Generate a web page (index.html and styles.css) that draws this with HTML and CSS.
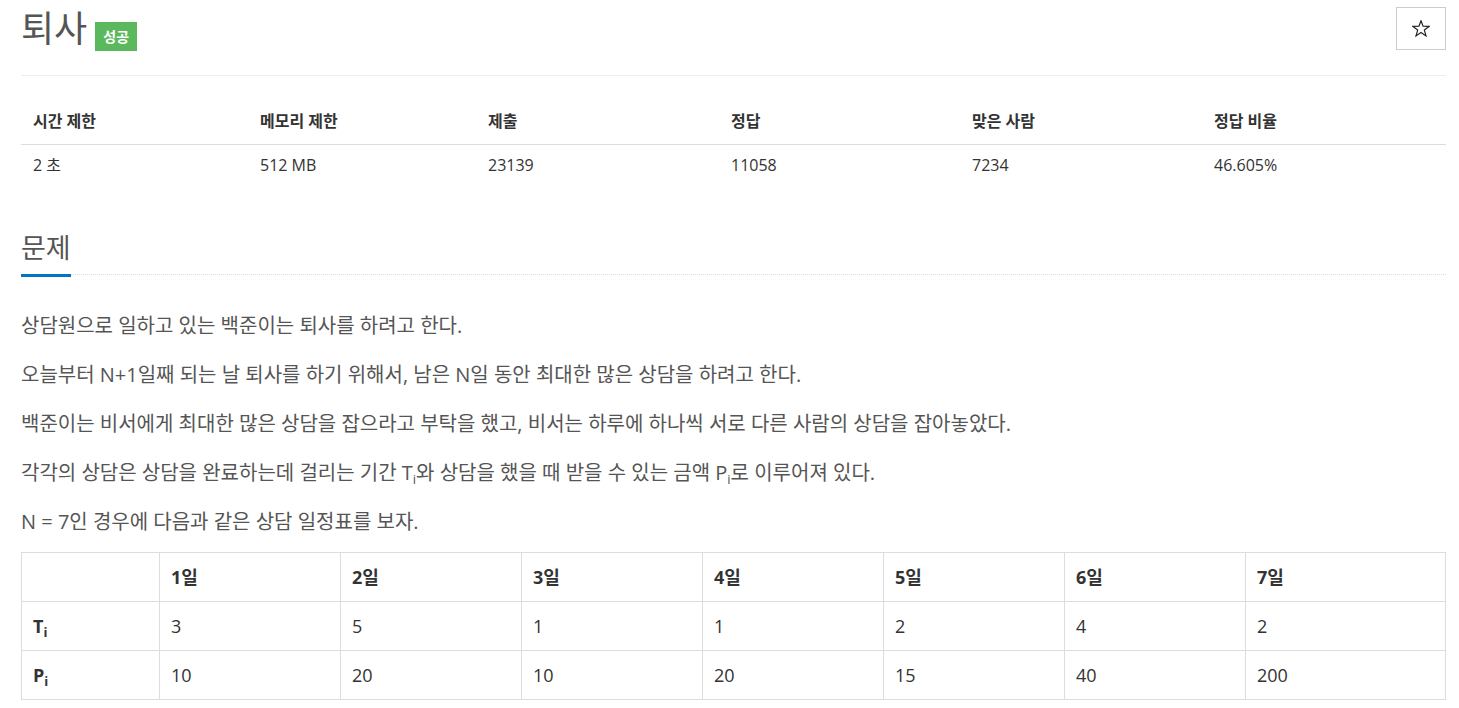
FILE: index.html
```html
<!DOCTYPE html>
<html lang="ko">

<head>
    <meta charset="UTF-8">
    <meta name="viewport" content="width=device-width, initial-scale=1.0">
    <title>퇴사</title>
    <link rel="stylesheet" href="styles.css">
</head>

<body>
    <div class="page">
        <div class="page-header">
            <div class="title-row">
                <h1 class="title">퇴사</h1>
                <span class="label-success">성공</span>
            </div>
            <button class="star-btn" type="button">
                <svg width="18" height="17" viewBox="0 0 18 17">
                    <polygon points="9,0.8 11.06,6.17 17.08,6.37 12.33,10.08 14,15.9 9,12.5 4,15.9 5.67,10.08 0.92,6.37 6.94,6.17"
                        fill="none" stroke="#222" stroke-width="1.2" stroke-linejoin="miter" />
                </svg>
            </button>
        </div>

        <table class="info-table">
            <colgroup>
                <col style="width: 227px">
                <col style="width: 228px">
                <col style="width: 243px">
                <col style="width: 241px">
                <col style="width: 242px">
                <col>
            </colgroup>
            <thead>
                <tr>
                    <th>시간 제한</th>
                    <th>메모리 제한</th>
                    <th>제출</th>
                    <th>정답</th>
                    <th>맞은 사람</th>
                    <th>정답 비율</th>
                </tr>
            </thead>
            <tbody>
                <tr>
                    <td>2 초</td>
                    <td>512 MB</td>
                    <td>23139</td>
                    <td>11058</td>
                    <td>7234</td>
                    <td>46.605%</td>
                </tr>
            </tbody>
        </table>

        <section class="problem">
            <div class="headline">
                <h2>문제</h2>
            </div>
            <div class="problem-text">
                <p>상담원으로 일하고 있는 백준이는 퇴사를 하려고 한다.</p>
                <p>오늘부터 N+1일째 되는 날 퇴사를 하기 위해서, 남은 N일 동안 최대한 많은 상담을 하려고 한다.</p>
                <p>백준이는 비서에게 최대한 많은 상담을 잡으라고 부탁을 했고, 비서는 하루에 하나씩 서로 다른 사람의 상담을 잡아놓았다.</p>
                <p>각각의 상담은 상담을 완료하는데 걸리는 기간 T<sub>i</sub>와 상담을 했을 때 받을 수 있는 금액 P<sub>i</sub>로 이루어져 있다.</p>
                <p>N = 7인 경우에 다음과 같은 상담 일정표를 보자.</p>

                <table class="schedule">
                    <colgroup>
                        <col style="width: 138px">
                        <col style="width: 181px">
                        <col style="width: 181px">
                        <col style="width: 181px">
                        <col style="width: 181px">
                        <col style="width: 181px">
                        <col style="width: 181px">
                        <col>
                    </colgroup>
                    <thead>
                        <tr>
                            <th></th>
                            <th>1일</th>
                            <th>2일</th>
                            <th>3일</th>
                            <th>4일</th>
                            <th>5일</th>
                            <th>6일</th>
                            <th>7일</th>
                        </tr>
                    </thead>
                    <tbody>
                        <tr>
                            <th>T<sub>i</sub></th>
                            <td>3</td>
                            <td>5</td>
                            <td>1</td>
                            <td>1</td>
                            <td>2</td>
                            <td>4</td>
                            <td>2</td>
                        </tr>
                        <tr>
                            <th>P<sub>i</sub></th>
                            <td>10</td>
                            <td>20</td>
                            <td>10</td>
                            <td>20</td>
                            <td>15</td>
                            <td>40</td>
                            <td>200</td>
                        </tr>
                    </tbody>
                </table>
            </div>
        </section>
    </div>
</body>

</html>
```

FILE: styles.css
```css
* {
    padding: 0;
    margin: 0;
    box-sizing: border-box;
}

body {
    font-family: "Open Sans", "Noto Sans CJK KR", sans-serif;
    color: #555;
    background-color: #fff;
}

.page {
    padding: 0 13px 0 21px;
}

/* 제목 영역 */
.page-header {
    display: flex;
    justify-content: space-between;
    align-items: flex-start;
    padding-top: 7px;
    padding-bottom: 24px;
    border-bottom: 1px solid #eee;
}

.title-row {
    display: flex;
    align-items: flex-start;
    margin-top: 2px;
}

.title {
    font-size: 36px;
    line-height: 40px;
    font-weight: 400;
    color: #555;
}

.label-success {
    margin: 13px 0 0 8px;
    height: 29px;
    padding: 0 8px;
    font-size: 14px;
    line-height: 29px;
    font-weight: 700;
    color: #fff;
    background-color: #5cb85c;
}

.star-btn {
    width: 50px;
    height: 43px;
    display: flex;
    align-items: center;
    justify-content: center;
    border: 1px solid #ccc;
    background-color: #fff;
    cursor: pointer;
}

/* 제한 정보 */
.info-table {
    width: 100%;
    margin-top: 23px;
    border-collapse: collapse;
    table-layout: fixed;
    font-size: 16px;
    color: #333;
}

.info-table th,
.info-table td {
    padding: 12px;
    line-height: 21px;
    text-align: left;
}

.info-table td {
    padding: 10px 12px;
}

.info-table th {
    font-weight: 700;
    border-bottom: 1px solid #ddd;
}

/* 문제 */
.problem {
    margin-top: 44px;
}

.headline {
    display: flex;
    border-bottom: 1px dotted #ddd;
}

.headline h2 {
    font-size: 27px;
    line-height: 36px;
    font-weight: 400;
    color: #555;
    padding-bottom: 8px;
    border-bottom: 3px solid #0076c0;
    margin-bottom: -3px;
}

.problem-text {
    margin-top: 32px;
    font-size: 20px;
}

.problem-text p {
    line-height: 37px;
    margin-bottom: 12px;
}

sub {
    font-size: 13px;
    line-height: 0;
    vertical-align: -4px;
}

.schedule {
    width: 100%;
    margin-top: 1px;
    border-collapse: collapse;
    table-layout: fixed;
    font-size: 18px;
    color: #333;
}

.schedule th,
.schedule td {
    border: 1px solid #ddd;
    padding: 11px 11px;
    line-height: 26px;
    text-align: left;
}

.schedule th {
    font-weight: 700;
}
```
